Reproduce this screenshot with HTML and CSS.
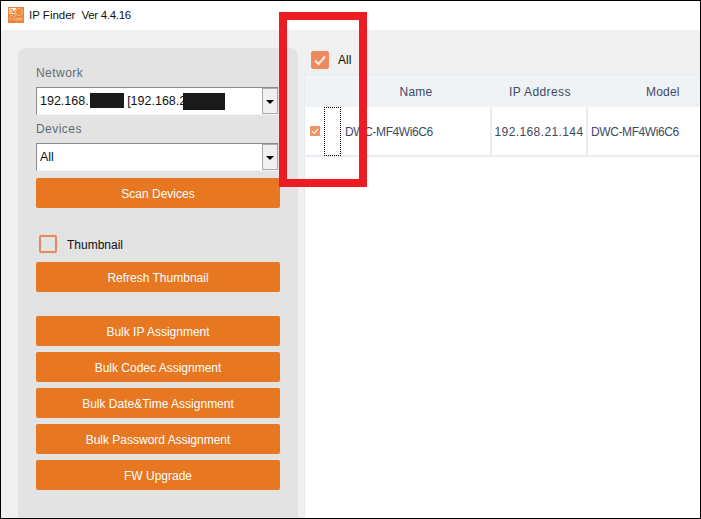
FILE: index.html
```html
<!DOCTYPE html>
<html>
<head>
<meta charset="utf-8">
<title>IP Finder</title>
<link rel="stylesheet" href="styles.css">
</head>
<body>
<div class="window">
  <header class="titlebar">
    <svg class="logo" width="16" height="16" viewBox="0 0 16 16">
      <rect width="16" height="16" fill="#ee8335"/>
      <rect x="1" y="1" width="7" height="6" fill="#fff"/>
      <path d="M2 2h1.2l.8 1v2l-.8 1H2zM4.6 2l.5 4h.6l.3-2 .3 2h.6l.5-4" fill="none" stroke="#d9681c" stroke-width=".7"/>
      <circle cx="11" cy="5" r="3.7" fill="#f08c3e" stroke="#f5b67f" stroke-width="1"/>
      <path d="M8 8L5.5 10.5" stroke="#f5b67f" stroke-width="1.2"/>
      <rect x="2" y="8" width="2.5" height="1.5" fill="#f5b67f"/>
      <path d="M2 13.5V11h1.5M2 12h1M5 11v2.5M6.5 13.5V11.5l1.8 2V11M9.7 11v2.5h1.2V11zM12 13.5V11h2v1.2h-2l2 1.3" fill="none" stroke="#f8cfa8" stroke-width=".6"/>
    </svg>
    <span class="app-title">IP Finder</span>
    <span class="app-version">Ver 4.4.16</span>
  </header>
  <div class="main">
    <aside class="panel">
      <label class="field-label">Network</label>
      <div class="combo">
        <span class="combo-text">192.168.<i class="redact r1"></i> [192.168.2<i class="redact r2"></i></span>
        <span class="combo-btn"></span>
      </div>
      <label class="field-label second">Devices</label>
      <div class="combo">
        <span class="combo-text">All</span>
        <span class="combo-btn"></span>
      </div>
      <button class="btn first">Scan Devices</button>
      <div class="thumb-row"><span class="box"></span><span class="thumb-label">Thumbnail</span></div>
      <button class="btn">Refresh Thumbnail</button>
      <div class="stack">
        <button class="btn">Bulk IP Assignment</button>
        <button class="btn">Bulk Codec Assignment</button>
        <button class="btn">Bulk Date&amp;Time Assignment</button>
        <button class="btn">Bulk Password Assignment</button>
        <button class="btn">FW Upgrade</button>
      </div>
    </aside>
    <section class="content">
      <div class="all-row">
        <svg class="check-all" width="18" height="18" viewBox="0 0 18 18"><rect width="18" height="18" rx="2" fill="#ee8a5e"/><path d="M4 9.5l3.5 3.5L14 5.5" fill="none" stroke="#fbeee6" stroke-width="2"/></svg>
        <span class="all-label">All</span>
      </div>
      <div class="table">
        <div class="thead">
          <span class="c-check"></span>
          <span class="c-name">Name</span>
          <span class="c-ip">IP Address</span>
          <span class="c-model">Model</span>
        </div>
        <div class="trow">
          <span class="c-check">
            <svg width="10" height="10" viewBox="0 0 10 10"><rect width="10" height="10" rx="1" fill="#ee9268"/><path d="M2 5.2l2.2 2.2L8 3" fill="none" stroke="#fbeee6" stroke-width="1.3"/></svg>
          </span>
          <span class="c-name cell">DWC-MF4Wi6C6</span>
          <span class="c-ip cell">192.168.21.144</span>
          <span class="c-model cell">DWC-MF4Wi6C6</span>
        </div>
      </div>
    </section>
  </div>
  <div class="focus-rect"></div>
  <div class="annotation"></div>
</div>
</body>
</html>
```
FILE: styles.css
```css
* { box-sizing: border-box; }
html, body { margin: 0; padding: 0; }
body { width: 701px; height: 519px; overflow: hidden; font-family: "Liberation Sans", sans-serif; font-size: 12px; }
.window { position: relative; width: 701px; height: 519px; border: 1px solid #000; background: #f0f0f0; display: flex; flex-direction: column; overflow: hidden; }
.titlebar { height: 29px; background: #fff; display: flex; align-items: center; padding: 0 0 0 7px; flex: none; }
.logo { margin-right: 5px; margin-top: -2px; }
.app-title { font-size: 11.5px; color: #111; margin-top: -2px; }
.app-version { font-size: 11.5px; letter-spacing: -.3px; color: #111; margin: -2px 0 0 6px; }
.main { flex: 1; display: flex; padding: 18px 0 0 17px; min-height: 0; }
.panel { width: 280px; background: #e3e3e3; border-radius: 8px 8px 0 0; padding: 16px 18px 0; display: flex; flex-direction: column; flex: none; }
.field-label { font-size: 12px; letter-spacing: .45px; color: #5f6b75; line-height: 19px; height: 23px; }
.field-label.second { margin-top: 5px; }
.combo { height: 28px; background: #fff; border: 1px solid #8c8c8c; border-right: 0; border-bottom: 1px solid #f4f4f4; display: flex; align-items: center; width: 242px; }
.combo-text { flex: 1; padding-left: 3px; font-size: 12.5px; color: #111; white-space: nowrap; }
.redact { display: inline-block; background: #1a1a1a; height: 15px; vertical-align: -3px; }
.r1 { width: 34px; margin-right: 0; margin-left: 1px; }
.r2 { width: 42px; height: 17px; vertical-align: -5px; margin-left: -3px; }
.combo-btn { width: 16px; height: 26px; background: #f0f0f0; border: 1px solid #aaa; position: relative; }
.combo-btn::after { content: ""; position: absolute; left: 3px; top: 11px; border: 4px solid transparent; border-top: 4px solid #000; border-bottom: 0; }
.btn { display: block; width: 244px; height: 30px; flex: none; border: 0; padding: 1px 0 0; border-radius: 2px; background: #e87722; color: #fff; font-family: "Liberation Sans", sans-serif; font-size: 12px; }
.btn.first { margin-top: 7px; }
.thumb-row { display: flex; align-items: center; height: 18px; margin: 27px 0 9px 3px; }
.box { width: 18px; height: 18px; border: 2px solid #e8875e; border-radius: 2px; }
.thumb-label { margin: 1px 0 0 10px; font-size: 12px; color: #111; }
.stack { display: flex; flex-direction: column; gap: 6px; margin-top: 24px; }
.content { flex: 1; margin-left: 6px; display: flex; flex-direction: column; min-width: 0; }
.all-row { height: 26px; display: flex; align-items: center; padding-left: 7px; margin-top: -1px; }
.check-all { flex: none; }
.all-label { margin-left: 9px; font-size: 12px; color: #111; }
.table { flex: 1; background: #fff; margin-top: 1px; border-top: 1px solid #e6ebf0; border-left: 1px solid #e6ebf0; }
.thead { height: 32px; padding-top: 1px; background: #eff3f6; display: flex; align-items: center; color: #3e4a63; font-size: 12px; letter-spacing: .2px; }
.thead .c-name { text-align: center; padding-right: 3px; }
.thead .c-ip { text-align: center; letter-spacing: .4px; }
.thead .c-model { text-align: left; padding-left: 58px; }
.trow { height: 50px; display: flex; align-items: center; border-bottom: 2px solid #e9edf1; color: #3e4a63; font-size: 12px; }
.c-check { width: 38px; flex: none; padding-left: 5px; display: flex; align-items: center; }
.c-name { width: 149px; flex: none; }
.c-ip { width: 96px; flex: none; }
.c-model { flex: 1; }
.cell { height: 48px; padding-top: 1px; display: flex; align-items: center; justify-content: center; border-right: 2px solid #e9edf1; }
.trow .c-name { justify-content: flex-start; padding-left: 2px; letter-spacing: -.4px; }
.trow .c-ip { letter-spacing: .4px; }
.trow .c-model { border-right: 0; justify-content: flex-start; padding-left: 3px; letter-spacing: -.4px; }
.focus-rect { position: absolute; left: 323px; top: 106px; width: 17px; height: 49px; border: 1px dotted #000; }
.annotation { position: absolute; left: 278px; top: 11px; width: 88px; height: 175px; border: 8px solid #ed1c24; }
```
